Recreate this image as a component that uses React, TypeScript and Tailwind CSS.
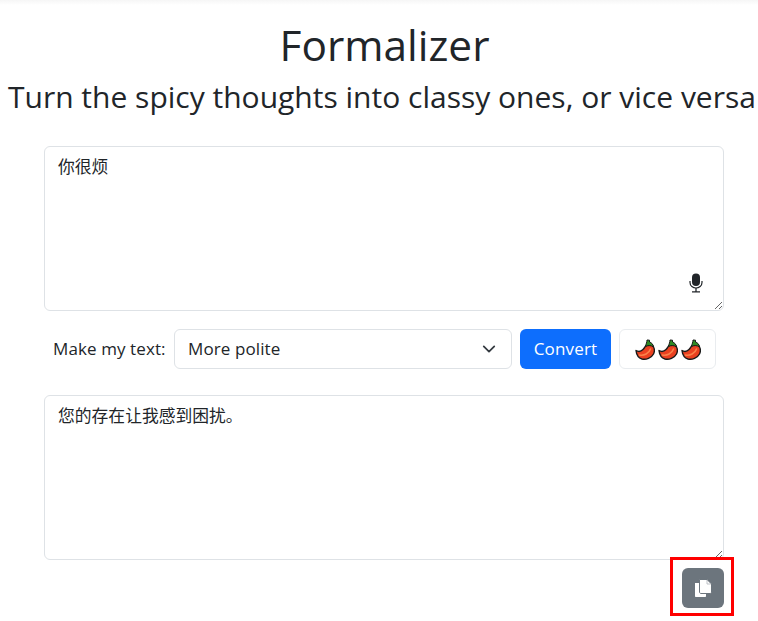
const font = { fontFamily: '"Open Sans", "Noto Sans CJK SC", sans-serif' };

function Chili() {
  return (
    <svg width="20" height="21" viewBox="0 0 20 21" className="block">
      <path d="M1 11.5 C3.5 13 6 12.5 8 10.5 C9.5 9 10 7.5 11 6.5 L17 5.5 C19.5 8.5 20 12 18.5 15 C16.5 19 11 21 7 20 C3.5 19 1.5 16 1 11.5 Z" fill="#ea4120" stroke="#1a1a1a" strokeWidth="1.4" strokeLinejoin="round" />
      <path d="M4.5 16 C9 17 14 14.5 15.5 10" fill="none" stroke="#f9824a" strokeWidth="1.6" strokeLinecap="round" />
      <path d="M10.5 7.5 C11 5 12 3 12 1 L14.5 1.2 L14.5 3 C16.5 3.5 18.2 5.5 18.5 8 C16 6.2 13 6.2 10.5 7.5 Z" fill="#2e8b22" stroke="#1a1a1a" strokeWidth="1" strokeLinejoin="round" />
    </svg>
  );
}

function Mic() {
  return (
    <svg width="16" height="20" viewBox="0 0 16 20" className="block">
      <rect x="4" y="0.5" width="8" height="12.5" rx="4" fill="#212529" />
      <path d="M2 8 V9.5 C2 13 5 15 8 15 C11 15 14 13 14 9.5 V8" fill="none" stroke="#212529" strokeWidth="1.2" />
      <path d="M8 15 V18.5 M4 18.8 H12" stroke="#212529" strokeWidth="1.3" />
    </svg>
  );
}

function CopyIcon() {
  return (
    <svg width="18" height="18" viewBox="0 0 18 18" className="block">
      <path d="M1 4 H11 C11.6 4 12 4.4 12 5 V17 C12 17.6 11.6 18 11 18 H2 C1.4 18 1 17.6 1 17 Z" fill="#fff" />
      <path d="M6 0.5 H13 L17.5 5 V13 C17.5 13.8 17 14.5 16 14.5 H7 C6 14.5 5.5 13.8 5.5 13 V1 C5.5 0.7 5.7 0.5 6 0.5 Z" fill="#fff" stroke="#6c757d" strokeWidth="1" />
      <path d="M13 1 V5 H17" fill="none" stroke="#aeb4ba" strokeWidth="0.8" />
    </svg>
  );
}

export default function App() {
  return (
    <div style={font} className="relative w-[758px] h-[621px] overflow-hidden bg-white text-[#212529]">
      <div className="h-[5px] bg-gradient-to-b from-[#f6f6f6] to-white" />
      <h1 className="mt-[15px] h-[50px] pl-[11px] text-center text-[42.4px] leading-[50px] font-normal">Formalizer</h1>
      <h2 className="mt-[7px] h-[40px] pl-[8px] text-[30px] leading-[40px] font-normal whitespace-nowrap">Turn the spicy thoughts into classy ones, or vice versa</h2>

      <div className="mt-[29px] ml-[44px] w-[680px]">
        <div className="relative h-[165px]">
          <textarea
            style={font}
            defaultValue="你很烦"
            className="block w-full h-full pt-[8px] pb-[6px] px-[13px] text-[16.8px] leading-[24px] border border-[#dee2e6] rounded-[6px] resize-y outline-none"
          />
          <div className="absolute left-[644px] top-[127px]"><Mic /></div>
        </div>

        <div className="mt-[18px] h-[40px] flex items-center gap-2 pl-[9px]">
          <span className="w-[113px] text-[17px] tracking-[0.1px] whitespace-nowrap">Make my text:</span>
          <div className="w-[338px] h-[40px] flex items-center justify-between pl-[13px] pr-[15px] border border-[#dee2e6] rounded-[6px] text-[17px] tracking-[0.1px]">
            <span>More polite</span>
            <svg width="14" height="14" viewBox="0 0 16 16" fill="none" stroke="#343a40" strokeWidth="2" strokeLinecap="round" strokeLinejoin="round"><path d="m2 5 6 6 6-6" /></svg>
          </div>
          <button className="w-[91px] h-[40px] bg-[#0d6efd] text-white text-[17px] tracking-[0.15px] rounded-[6px]">Convert</button>
          <button className="w-[97px] h-[40px] flex items-center justify-center gap-[3px] border border-[#e9ecef] rounded-[6px]">
            <Chili /><Chili /><Chili />
          </button>
        </div>

        <textarea
          style={font}
          defaultValue="您的存在让我感到困扰。"
          className="mt-[26px] block w-full h-[165px] pt-[8px] pb-[6px] px-[13px] text-[16.8px] leading-[24px] border border-[#dee2e6] rounded-[6px] resize-y outline-none"
        />

        <div className="mt-[8px] flex justify-end">
          <button className="w-[42px] h-[40px] flex items-center justify-center bg-[#6c757d] rounded-[6px]"><CopyIcon /></button>
        </div>
      </div>

      <div className="absolute left-[670px] top-[557px] w-[64px] h-[59px] border-[3px] border-[#f00]" />
    </div>
  );
}
